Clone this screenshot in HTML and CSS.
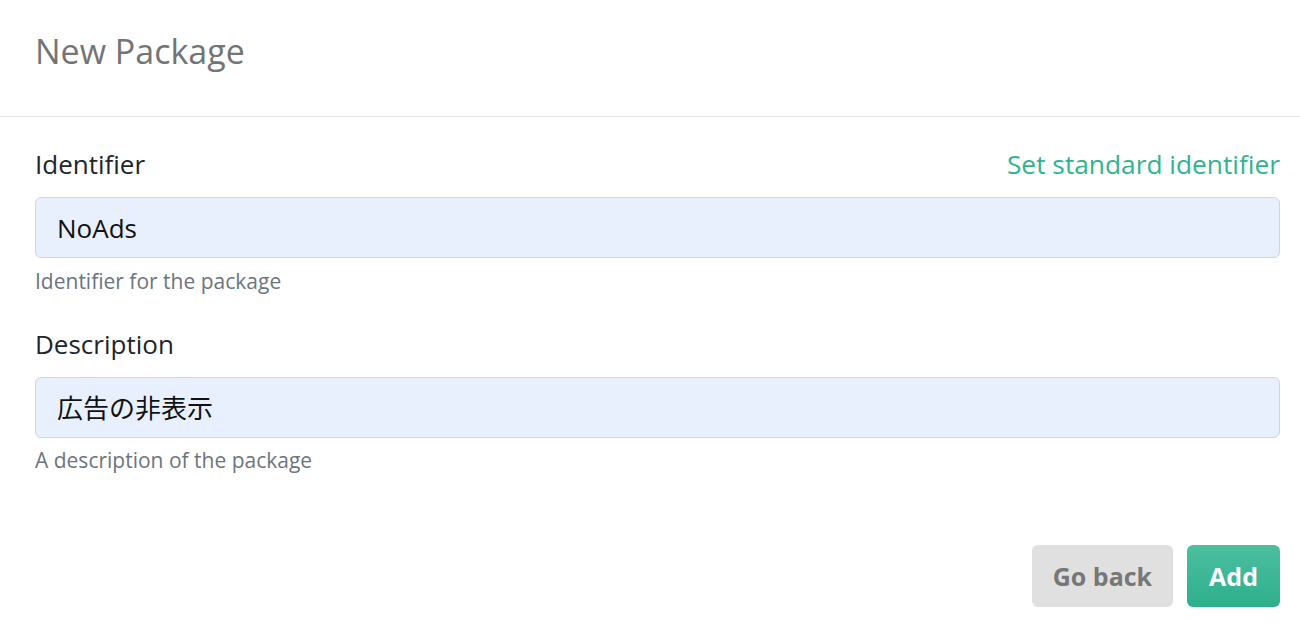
FILE: index.html
```html
<!DOCTYPE html>
<html lang="en">
<head>
<meta charset="utf-8">
<title>New Package</title>
<link rel="stylesheet" href="styles.css">
</head>
<body>
<div class="modal">
  <header class="modal-header">
    <h3 class="modal-title">New Package</h3>
  </header>
  <div class="modal-body">
    <div class="field">
      <div class="label-row">
        <label class="label" for="ident">Identifier</label>
        <a class="link" href="#">Set standard identifier</a>
      </div>
      <input id="ident" class="input" type="text" value="NoAds">
      <div class="help">Identifier for the package</div>
    </div>
    <div class="field">
      <div class="label-row">
        <label class="label" for="desc">Description</label>
      </div>
      <input id="desc" class="input" type="text" value="広告の非表示">
      <div class="help">A description of the package</div>
    </div>
    <div class="actions">
      <button class="btn btn-secondary" type="button">Go back</button>
      <button class="btn btn-primary" type="button">Add</button>
    </div>
  </div>
</div>
</body>
</html>
```
FILE: styles.css
```css
* { box-sizing: border-box; }
html, body {
  margin: 0;
  padding: 0;
  background: #ffffff;
}
body {
  font-family: "Open Sans", "Noto Sans CJK JP", sans-serif;
  color: #212529;
}
.modal-header {
  padding: 31px 35px 44px;
  border-bottom: 1px solid #e3e3e3;
}
.modal-title {
  margin: 0;
  font-size: 34px;
  font-weight: 400;
  line-height: 41px;
  color: #747474;
}
.modal-body {
  padding: 28px 20px 0 35px;
}
.field {
  margin-bottom: 29px;
}
.label-row {
  display: flex;
  justify-content: space-between;
  align-items: baseline;
  margin-bottom: 13px;
}
.label {
  font-size: 26px;
  line-height: 39px;
  color: #212529;
}
.link {
  font-size: 26.3px;
  line-height: 39px;
  color: #2fb48f;
  text-decoration: none;
}
.input {
  display: block;
  width: 100%;
  height: 61px;
  padding: 10px 21px;
  font-family: "Open Sans", "Noto Sans CJK JP", sans-serif;
  font-size: 26px;
  line-height: 39px;
  color: #111;
  background: #e8f0fe;
  border: 1px solid #cfd5de;
  border-radius: 6px;
  outline: none;
}
.help {
  margin-top: 8.5px;
  font-size: 21px;
  line-height: 29px;
  color: #6c757d;
}
.actions {
  display: flex;
  justify-content: flex-end;
  gap: 14px;
  margin-top: 70px;
}
.btn {
  height: 62px;
  padding: 0 21px;
  font-family: "Open Sans", sans-serif;
  font-size: 25px;
  font-weight: 700;
  border: none;
  border-radius: 6px;
}
.btn-secondary {
  background: #e0e0e0;
  color: #777777;
}
.btn-primary {
  background: linear-gradient(#4cbf9f, #2daf8c);
  color: #ffffff;
  padding: 0 22px;
}
```
